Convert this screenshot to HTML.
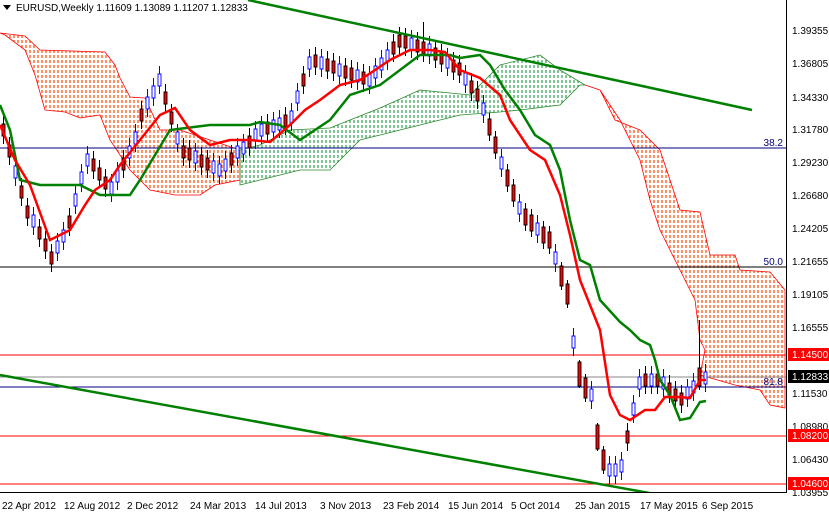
<!DOCTYPE html><html><head><style>body{margin:0;width:829px;height:513px;overflow:hidden;background:#fff;font-family:"Liberation Sans",sans-serif}</style></head><body>
<svg width="829" height="513" xmlns="http://www.w3.org/2000/svg" font-family="Liberation Sans, sans-serif" font-size="10">
<defs>
<pattern id="po" width="4" height="5" patternUnits="userSpaceOnUse"><line x1="2" y1="0" x2="2" y2="3" stroke="#ff4500" stroke-width="1.2"/></pattern>
<pattern id="pg" width="4" height="5" patternUnits="userSpaceOnUse"><line x1="2" y1="0" x2="2" y2="3" stroke="#2e9e4e" stroke-width="1.2"/></pattern>
</defs>
<rect width="829" height="513" fill="#fff"/>
<polygon fill="url(#po)" stroke="#f00" stroke-width="0.8" points="0,33 25,36 40,50 105,52 115,65 120,78 130,97 145,98 160,130 180,130 210,140 240,150 240,180 215,185 200,195 175,195 150,190 130,170 110,140 100,115 80,118 65,112 45,110 35,75 25,50 5,35"/>
<polygon fill="url(#pg)" stroke="#2a8a2a" stroke-width="0.8" points="240,150 260,145 290,130 330,128 350,120 380,108 420,90 470,95 500,65 540,55 560,70 585,85 580,85 560,105 520,110 500,112 460,115 420,125 380,135 360,140 330,170 300,170 260,180 240,185"/>
<polygon fill="url(#po)" stroke="#f00" stroke-width="0.8" points="585,85 600,90 615,120 640,130 660,150 680,210 700,212 710,255 735,255 740,270 770,272 785,290 785,408 770,405 760,390 735,385 700,375 705,350 700,340 695,300 690,290 680,270 670,250 660,230 650,200 640,160 620,120 600,90"/>
<line x1="0" y1="148" x2="786" y2="148" stroke="#000080"/>
<line x1="0" y1="267" x2="786" y2="267" stroke="#000"/>
<line x1="0" y1="355" x2="786" y2="355" stroke="#f00"/>
<line x1="0" y1="377" x2="786" y2="377" stroke="#888"/>
<line x1="0" y1="387" x2="786" y2="387" stroke="#000080"/>
<line x1="0" y1="436" x2="786" y2="436" stroke="#f00"/>
<line x1="0" y1="484" x2="786" y2="484" stroke="#f00"/>
<text x="783" y="146" fill="#000080" text-anchor="end">38.2</text>
<text x="783" y="265" fill="#000080" text-anchor="end">50.0</text>
<text x="783" y="385" fill="#000080" text-anchor="end">81.8</text>
<path stroke="#00f" fill="none" d="M15.5,158v28M33.5,207v28M57.5,233v28M63.5,222v28M75.5,186v28M81.5,164v28M87.5,146v28M111.5,174v28M117.5,162v28M129.5,138v28M135.5,124v28M147.5,89v28M153.5,78v28M159.5,66v28M177.5,124v28M195.5,143v28M213.5,153v28M219.5,156v28M225.5,151v28M237.5,138v28M243.5,134v28M255.5,121v28M261.5,116v28M273.5,112v28M279.5,110v28M291.5,103v28M297.5,83v28M309.5,49v28M321.5,49v28M339.5,56v28M357.5,62v28M369.5,66v28M375.5,58v28M381.5,50v28M387.5,42v28M411.5,30v28M429.5,36v28M447.5,48v28M465.5,65v28M483.5,95v28M501.5,149v28M519.5,194v28M537.5,215v28M555.5,244v28M573.5,328v28M591.5,381v28M609.5,456v28M615.5,456v28M621.5,452v28M633.5,395v28M639.5,369v28M651.5,366v28M663.5,369v28M687.5,379v28M693.5,373v28M705.5,364v28"/>
<path stroke="#00f" fill="#fff" stroke-width="0.9" d="M14,166h3v12h-3zM32,215h3v12h-3zM56,241h3v12h-3zM62,230h3v12h-3zM74,194h3v12h-3zM80,172h3v12h-3zM86,154h3v12h-3zM110,182h3v12h-3zM116,170h3v12h-3zM128,146h3v12h-3zM134,132h3v12h-3zM146,97h3v12h-3zM152,86h3v12h-3zM158,74h3v12h-3zM176,132h3v12h-3zM194,151h3v12h-3zM212,161h3v12h-3zM218,164h3v12h-3zM224,159h3v12h-3zM236,146h3v12h-3zM242,142h3v12h-3zM254,129h3v12h-3zM260,124h3v12h-3zM272,120h3v12h-3zM278,118h3v12h-3zM290,111h3v12h-3zM296,91h3v12h-3zM308,57h3v12h-3zM320,57h3v12h-3zM338,64h3v12h-3zM356,70h3v12h-3zM368,74h3v12h-3zM374,66h3v12h-3zM380,58h3v12h-3zM386,50h3v12h-3zM410,38h3v12h-3zM428,44h3v12h-3zM446,56h3v12h-3zM464,73h3v12h-3zM482,103h3v12h-3zM500,157h3v12h-3zM518,202h3v12h-3zM536,223h3v12h-3zM554,252h3v12h-3zM572,336h3v12h-3zM590,389h3v12h-3zM608,464h3v12h-3zM614,464h3v12h-3zM620,460h3v12h-3zM632,403h3v12h-3zM638,377h3v12h-3zM650,374h3v12h-3zM662,377h3v12h-3zM686,387h3v12h-3zM692,381h3v12h-3zM704,372h3v12h-3z"/>
<path stroke="#000" fill="none" d="M3.5,116v28M9.5,137v28M21.5,178v28M27.5,198v28M39.5,219v28M45.5,231v28M51.5,244v28M69.5,208v28M93.5,151v28M99.5,160v28M105.5,169v28M123.5,150v28M141.5,101v28M165.5,84v28M171.5,104v28M183.5,138v28M189.5,140v28M201.5,147v28M207.5,150v28M231.5,145v28M249.5,128v28M267.5,114v28M285.5,107v28M303.5,66v28M315.5,47v28M327.5,51v28M333.5,53v28M345.5,58v28M351.5,60v28M363.5,64v28M393.5,34v28M399.5,27v28M405.5,28v28M417.5,32v28M423.5,22v40M435.5,40v28M441.5,44v28M453.5,52v28M459.5,55v28M471.5,73v28M477.5,81v28M489.5,113v28M495.5,131v28M507.5,164v28M513.5,179v28M525.5,203v28M531.5,209v28M543.5,221v28M549.5,226v28M561.5,262v28M567.5,280v28M579.5,360v28M585.5,374v28M597.5,423v28M603.5,446v28M627.5,423v28M645.5,366v28M657.5,366v28M669.5,375v28M675.5,381v28M681.5,385v28M699.5,320v70"/>
<path stroke="#000" fill="#f00" stroke-width="0.9" d="M2,124h3v12h-3zM8,145h3v12h-3zM20,186h3v12h-3zM26,206h3v12h-3zM38,227h3v12h-3zM44,239h3v12h-3zM50,252h3v12h-3zM68,216h3v12h-3zM92,159h3v12h-3zM98,168h3v12h-3zM104,177h3v12h-3zM122,158h3v12h-3zM140,109h3v12h-3zM164,92h3v12h-3zM170,112h3v12h-3zM182,146h3v12h-3zM188,148h3v12h-3zM200,155h3v12h-3zM206,158h3v12h-3zM230,153h3v12h-3zM248,136h3v12h-3zM266,122h3v12h-3zM284,115h3v12h-3zM302,74h3v12h-3zM314,55h3v12h-3zM326,59h3v12h-3zM332,61h3v12h-3zM344,66h3v12h-3zM350,68h3v12h-3zM362,72h3v12h-3zM392,42h3v12h-3zM398,35h3v12h-3zM404,36h3v12h-3zM416,40h3v12h-3zM422,42h3v12h-3zM434,48h3v12h-3zM440,52h3v12h-3zM452,60h3v12h-3zM458,63h3v12h-3zM470,81h3v12h-3zM476,89h3v12h-3zM488,119h3v16h-3zM494,137h3v16h-3zM506,170h3v16h-3zM512,185h3v16h-3zM524,209h3v16h-3zM530,215h3v16h-3zM542,227h3v16h-3zM548,232h3v16h-3zM560,266h3v20h-3zM566,284h3v20h-3zM578,362h3v24h-3zM584,378h3v20h-3zM596,425h3v24h-3zM602,450h3v20h-3zM626,431h3v12h-3zM644,374h3v12h-3zM656,374h3v12h-3zM668,383h3v12h-3zM674,389h3v12h-3zM680,393h3v12h-3zM698,368h3v18h-3z"/>
<polyline fill="none" stroke="#008000" stroke-width="2.5" points="0,105 10,130 20,180 40,185 80,185 100,195 130,195 140,180 170,130 210,125 250,125 260,122 280,125 300,140 330,120 350,95 380,85 400,70 420,55 450,55 460,58 480,55 490,65 505,90 520,110 535,135 550,145 560,170 570,220 580,260 590,265 600,300 620,322 630,330 640,340 650,345 655,360 660,380 670,395 680,420 690,418 700,402 706,401"/>
<polyline fill="none" stroke="#f00" stroke-width="2.5" points="0,125 15,160 30,185 50,240 70,230 85,205 95,190 110,180 120,165 140,140 160,115 175,108 190,130 210,145 230,140 250,140 270,142 290,125 305,110 320,100 340,85 360,80 390,60 410,50 430,50 445,52 460,70 480,78 500,95 510,120 530,150 545,160 560,195 570,235 580,280 590,305 600,330 610,395 620,415 630,420 645,410 655,410 665,397 680,397 690,398 700,380 706,380"/>
<line x1="248" y1="0" x2="752" y2="110" stroke="#008000" stroke-width="2.5"/>
<line x1="0" y1="375" x2="660" y2="495" stroke="#008000" stroke-width="2.5"/>
<rect x="787" y="0" width="42" height="513" fill="#fff"/>
<rect x="0" y="493" width="829" height="20" fill="#fff"/>
<line x1="786.5" y1="0" x2="786.5" y2="493" stroke="#000"/>
<line x1="0" y1="492.5" x2="787" y2="492.5" stroke="#000"/>
<g fill="#000">
<text x="792" y="34">1.39355</text><text x="792" y="67">1.36805</text><text x="792" y="101">1.34330</text><text x="792" y="133">1.31780</text><text x="792" y="166">1.29230</text><text x="792" y="199">1.26680</text><text x="792" y="232">1.24205</text><text x="792" y="265">1.21655</text><text x="792" y="298">1.19105</text><text x="792" y="331">1.16555</text><text x="792" y="397">1.11530</text><text x="792" y="430">1.08980</text><text x="792" y="463">1.06430</text><text x="792" y="496">1.03955</text>
</g>
<rect x="788" y="348" width="41" height="13" fill="#f00"/><text x="792" y="358" fill="#fff">1.14500</text>
<rect x="788" y="370" width="41" height="13" fill="#000"/><text x="792" y="380" fill="#fff">1.12833</text>
<rect x="788" y="429" width="41" height="13" fill="#f00"/><text x="792" y="439" fill="#fff">1.08200</text>
<rect x="788" y="477" width="41" height="13" fill="#f00"/><text x="792" y="487" fill="#fff">1.04600</text>
<g fill="#000">
<text x="2" y="509">22 Apr 2012</text><text x="64" y="509">12 Aug 2012</text><text x="127" y="509">2 Dec 2012</text><text x="190" y="509">24 Mar 2013</text><text x="255" y="509">14 Jul 2013</text><text x="320" y="509">3 Nov 2013</text><text x="383" y="509">23 Feb 2014</text><text x="448" y="509">15 Jun 2014</text><text x="511" y="509">5 Oct 2014</text><text x="575" y="509">25 Jan 2015</text><text x="640" y="509">17 May 2015</text><text x="702" y="509">6 Sep 2015</text>
</g>
<polygon points="3,5 11,5 7,10" fill="#000"/>
<text x="16" y="11" fill="#000">EURUSD,Weekly  1.11609 1.13089 1.11207 1.12833</text>
</svg>
</body></html>
